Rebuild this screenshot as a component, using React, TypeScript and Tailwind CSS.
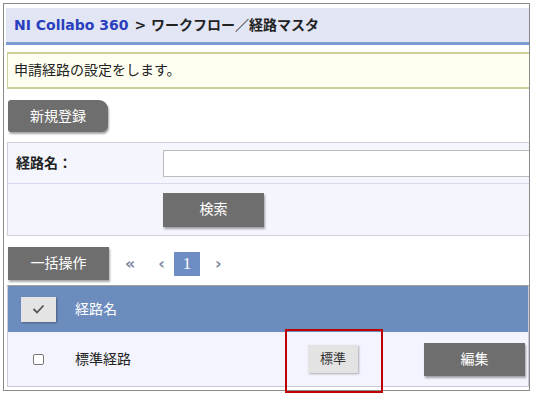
import React from "react";

const font = { fontFamily: '"DejaVu Sans", "Noto Sans CJK JP", sans-serif' };

function GrayButton({ children, className = "" }: { children: React.ReactNode; className?: string }) {
  return (
    <div
      className={`flex items-center justify-center bg-[#6e6e6e] text-white text-[14px] shadow-[1px_2px_2px_rgba(0,0,0,0.35)] ${className}`}
    >
      {children}
    </div>
  );
}

export default function App() {
  return (
    <div className="relative w-[534px] h-[399px] bg-white pt-[3px] pl-[3px]" style={font}>
      <div className="w-[527px] h-[388px] border border-[#8a8a8a] overflow-hidden pl-[2px] pt-[4px]">
        {/* header */}
        <div className="h-[37px] bg-[#e1e5f4] border-b-[3px] border-[#7c9bd1] flex items-center pl-[8px] text-[14px] font-bold">
          <span className="text-[#2a3fbf]">NI Collabo 360</span>
          <span className="text-[#222] ml-[6px]">&gt; ワークフロー／経路マスタ</span>
        </div>
        {/* notice */}
        <div className="mt-[7px] ml-[1px] h-[37px] bg-[#fefff0] border-y-[2px] border-l border-[#cfcf98] flex items-center pl-[6px] text-[14px] text-[#222]">
          申請経路の設定をします。
        </div>
        {/* new */}
        <GrayButton className="mt-[11px] ml-[2px] w-[100px] h-[32px] rounded-[3px] rounded-tr-[9px] rounded-br-[6px]">
          新規登録
        </GrayButton>
        {/* search */}
        <div className="mt-[10px] ml-[1px] border border-r-0 border-[#cfd0dc] bg-[#f4f5fd] text-[14px]">
          <div className="h-[41px] flex items-center border-b border-[#d8d8ee]">
            <div className="w-[155px] shrink-0 pl-[8px] font-bold text-[#222]">経路名：</div>
            <div className="w-[400px] shrink-0 h-[27px] bg-white border border-[#bcbcbc]"></div>
          </div>
          <div className="h-[51px] flex items-center pl-[155px]">
            <GrayButton className="w-[101px] h-[34px]">検索</GrayButton>
          </div>
        </div>
        {/* bulk & paging */}
        <div className="mt-[11px] ml-[2px] flex items-center h-[33px]">
          <GrayButton className="w-[101px] h-[33px]">一括操作</GrayButton>
          <span className="ml-[16px] text-[#7f88a3] text-[16px] font-bold">«</span>
          <span className="ml-[23px] text-[#7f88a3] text-[16px] font-bold">‹</span>
          <span
            className="ml-[9px] w-[26px] h-[24px] bg-[#6d8dc4] text-white flex items-center justify-center text-[17px]"
            style={{ fontFamily: '"Liberation Serif", serif' }}
          >
            1
          </span>
          <span className="ml-[15px] text-[#7f88a3] text-[16px] font-bold">›</span>
        </div>
        {/* table */}
        <div className="mt-[5px] ml-[1px] border border-t-[#a0a0a0] border-x-[#c8c8d8] border-b-[#c8c8d8] text-[14px]">
          <div className="h-[46px] bg-[#6d8cbe] flex items-center">
            <div className="ml-[13px] w-[35px] h-[25px] bg-[#e4e4e4] shadow-[1px_1px_2px_rgba(0,0,0,0.35)] flex items-center justify-center">
              <svg width="13" height="10" viewBox="0 0 13 10">
                <path d="M1.5 5 L5 8.5 L11.5 1.5" fill="none" stroke="#555" strokeWidth="1.8" />
              </svg>
            </div>
            <div className="ml-[19px] text-white">経路名</div>
          </div>
          <div className="h-[54px] bg-[#f3f4fd] flex items-center">
            <div className="ml-[25px] w-[11px] h-[11px] border border-[#777] rounded-[2px] bg-white"></div>
            <div className="ml-[31px] w-[233px] text-[#222]">標準経路</div>
            <div className="w-[50px] h-[28px] bg-[#e3e3e3] text-[#333] text-[13px] flex items-center justify-center shadow-[1px_1px_2px_rgba(0,0,0,0.3)]">
              標準
            </div>
            <GrayButton className="ml-[66px] w-[101px] h-[33px]">編集</GrayButton>
          </div>
        </div>
      </div>
      {/* highlight */}
      <div className="absolute left-[285px] top-[329px] w-[98px] h-[64px] border-2 border-[#c00000]"></div>
    </div>
  );
}
